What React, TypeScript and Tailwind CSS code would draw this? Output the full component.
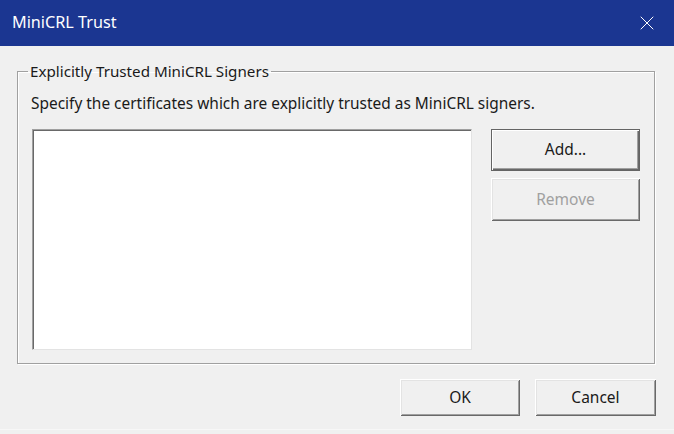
import { X } from "lucide-react";

const font = { fontFamily: '"Noto Sans", "Open Sans", sans-serif' };

function ClassicButton({
  label,
  isDefault = false,
  disabled = false,
  className = "",
}: {
  label: string;
  isDefault?: boolean;
  disabled?: boolean;
  className?: string;
}) {
  return (
    <button
      type="button"
      disabled={disabled}
      className={[
        "flex items-center justify-center bg-[#f0f0f0] text-[15.5px]",
        isDefault
          ? "border border-[#646464] shadow-[inset_1px_1px_0_#ffffff,inset_-1px_-1px_0_#696969,inset_-2px_-2px_0_#a0a0a0]"
          : "shadow-[inset_1px_1px_0_#ffffff,inset_-1px_-1px_0_#696969,inset_2px_2px_0_#e3e3e3,inset_-2px_-2px_0_#a0a0a0]",
        disabled ? "text-[#a0a0a0]" : "text-[#1a1a1a]",
        className,
      ].join(" ")}
    >
      {label}
    </button>
  );
}

export default function App() {
  return (
    <div className="w-[674px] h-[434px] flex flex-col bg-[#f0f0f0] overflow-hidden" style={font}>
      {/* title bar */}
      <div className="h-[46px] shrink-0 bg-[#1b3691] flex items-center justify-between pl-3 pr-[15px]">
        <span className="text-white text-[16.2px] leading-none pb-[1px]">MiniCRL Trust</span>
        <X className="w-[24px] h-[24px] text-white" strokeWidth={1} />
      </div>

      {/* body */}
      <div className="flex-1 flex flex-col pl-[17px] pr-[18px] pt-[15px]">
        <fieldset className="w-[637px] h-[303px] border border-[#a0a0a0] shadow-[inset_1px_1px_0_#ffffff,1px_1px_0_#ffffff] pl-[14px] pr-[14px]">
          <legend className="-ml-[4px] px-[2px] text-[15.2px] leading-[20px] text-[#1a1a1a]">
            Explicitly Trusted MiniCRL Signers
          </legend>
          <p className="text-[15.45px] leading-[20px] text-[#1a1a1a] mt-[12px] -ml-[1px]">
            Specify the certificates which are explicitly trusted as MiniCRL signers.
          </p>
          <div className="flex gap-[19px] mt-[16px]">
            <div className="w-[440px] h-[221px] bg-white border border-t-[#a0a0a0] border-l-[#a0a0a0] border-b-[#e3e3e3] border-r-[#e3e3e3] shadow-[inset_1px_1px_0_#696969]" />
            <div className="flex flex-col gap-[7px]">
              <ClassicButton label="Add..." isDefault className="w-[149px] h-[42px]" />
              <ClassicButton label="Remove" disabled className="w-[149px] h-[43px]" />
            </div>
          </div>
        </fieldset>

        <div className="flex justify-end gap-[15px] mt-[15px]">
          <ClassicButton label="OK" className="w-[120px] h-[37px]" />
          <ClassicButton label="Cancel" className="w-[121px] h-[37px]" />
        </div>
      </div>
      <div className="h-[5px] border-t border-[#f7f7f7] bg-[#f0f0f0]" />
    </div>
  );
}
